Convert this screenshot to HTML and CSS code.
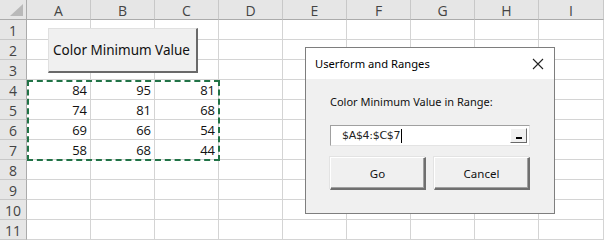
FILE: index.html
```html
<!DOCTYPE html>
<html>
<head>
<meta charset="utf-8">
<link rel="stylesheet" href="styles.css">
</head>
<body>
<div class="sheet">
  <div class="grid">
    <div class="hdr corner"><span class="tri"></span></div>
    <div class="hdr col">A</div><div class="hdr col">B</div><div class="hdr col">C</div><div class="hdr col">D</div><div class="hdr col">E</div><div class="hdr col">F</div><div class="hdr col">G</div><div class="hdr col">H</div><div class="hdr col">I</div>

    <div class="hdr row">1</div><div class="c"></div><div class="c"></div><div class="c"></div><div class="c"></div><div class="c"></div><div class="c"></div><div class="c"></div><div class="c"></div><div class="c"></div>
    <div class="hdr row">2</div><div class="c"></div><div class="c"></div><div class="c"></div><div class="c"></div><div class="c"></div><div class="c"></div><div class="c"></div><div class="c"></div><div class="c"></div>
    <div class="hdr row">3</div><div class="c"></div><div class="c"></div><div class="c"></div><div class="c"></div><div class="c"></div><div class="c"></div><div class="c"></div><div class="c"></div><div class="c"></div>
    <div class="hdr row">4</div><div class="c n">84</div><div class="c n">95</div><div class="c n">81</div><div class="c"></div><div class="c"></div><div class="c"></div><div class="c"></div><div class="c"></div><div class="c"></div>
    <div class="hdr row">5</div><div class="c n">74</div><div class="c n">81</div><div class="c n">68</div><div class="c"></div><div class="c"></div><div class="c"></div><div class="c"></div><div class="c"></div><div class="c"></div>
    <div class="hdr row">6</div><div class="c n">69</div><div class="c n">66</div><div class="c n">54</div><div class="c"></div><div class="c"></div><div class="c"></div><div class="c"></div><div class="c"></div><div class="c"></div>
    <div class="hdr row">7</div><div class="c n">58</div><div class="c n">68</div><div class="c n">44</div><div class="c"></div><div class="c"></div><div class="c"></div><div class="c"></div><div class="c"></div><div class="c"></div>
    <div class="hdr row">8</div><div class="c"></div><div class="c"></div><div class="c"></div><div class="c"></div><div class="c"></div><div class="c"></div><div class="c"></div><div class="c"></div><div class="c"></div>
    <div class="hdr row">9</div><div class="c"></div><div class="c"></div><div class="c"></div><div class="c"></div><div class="c"></div><div class="c"></div><div class="c"></div><div class="c"></div><div class="c"></div>
    <div class="hdr row">10</div><div class="c"></div><div class="c"></div><div class="c"></div><div class="c"></div><div class="c"></div><div class="c"></div><div class="c"></div><div class="c"></div><div class="c"></div>
    <div class="hdr row">11</div><div class="c"></div><div class="c"></div><div class="c"></div><div class="c"></div><div class="c"></div><div class="c"></div><div class="c"></div><div class="c"></div><div class="c"></div>
  </div>

  <div class="marquee"></div>

  <div class="sheetbtn">Color Minimum Value</div>

  <div class="dialog">
    <div class="titlebar">
      <span class="title">Userform and Ranges</span>
      <svg class="close" width="12" height="12" viewBox="0 0 12 12"><path d="M1 1 L11 11 M11 1 L1 11" stroke="#222" stroke-width="1.1" fill="none"/></svg>
    </div>
    <div class="body">
      <div class="label">Color Minimum Value in Range:</div>
      <div class="refedit">
        <span class="reftext">$A$4:$C$7</span><span class="caret"></span>
        <span class="refbtn"><span class="bar"></span></span>
      </div>
      <div class="buttons">
        <div class="btn">Go</div>
        <div class="btn">Cancel</div>
      </div>
    </div>
  </div>
</div>
</body>
</html>
```

FILE: styles.css
```css
* { box-sizing: border-box; }
html, body { margin: 0; padding: 0; background: #fff; }
body { width: 604px; height: 241px; overflow: hidden; }

.sheet { position: relative; width: 604px; height: 241px; }

.grid {
  display: grid;
  grid-template-columns: 27px repeat(8, 64px) 65px;
  grid-template-rows: 20px repeat(11, 20px);
}

.hdr {
  background: #e6e6e6;
  color: #444;
  font-family: "Open Sans", "Noto Sans", sans-serif;
  font-size: 14px;
  display: flex;
  align-items: center;
  justify-content: center;
  border-right: 1px solid #c8c8c8;
  border-bottom: 1px solid #c8c8c8;
}
.hdr.col { border-bottom: 1px solid #ababab; padding-top: 1px; }
.hdr.row { border-right: 1px solid #ababab; padding-top: 1px; }
.hdr.corner { position: relative; border-bottom: 1px solid #ababab; border-right: 1px solid #ababab; }
.tri {
  position: absolute;
  right: 3px;
  bottom: 3px;
  width: 0; height: 0;
  border-left: 13px solid transparent;
  border-bottom: 12px solid #b9b9b9;
}

.c {
  border-right: 1px solid #d4d4d4;
  border-bottom: 1px solid #d4d4d4;
  font-family: "Open Sans", "Noto Sans", sans-serif;
  font-size: 13px;
  color: #111;
}
.n {
  display: flex;
  align-items: center;
  justify-content: flex-end;
  padding-right: 3px;
  padding-top: 1px;
}

.marquee {
  position: absolute;
  left: 27px;
  top: 80px;
  width: 193px;
  height: 81px;
  border: 2px dashed #217346;
}

.sheetbtn {
  position: absolute;
  left: 48px;
  top: 28px;
  width: 150px;
  height: 45px;
  background: #f0f0f0;
  border-top: 1px solid #e0e0e0;
  border-left: 1px solid #e0e0e0;
  border-right: 2px solid #6a6a6a;
  border-bottom: 2px solid #6a6a6a;
  font-family: "Noto Sans", "Open Sans", sans-serif;
  font-size: 13.5px;
  color: #111;
  display: flex;
  align-items: center;
  justify-content: center;
  padding-right: 2px;
}

.dialog {
  position: absolute;
  left: 305px;
  top: 47px;
  width: 250px;
  height: 167px;
  border: 1px solid #7e7e7e;
  background: #f0f0f0;
  font-family: "Noto Sans", "Open Sans", sans-serif;
  font-size: 11px;
  color: #111;
  display: flex;
  flex-direction: column;
}
.titlebar {
  height: 31px;
  background: #fff;
  display: flex;
  align-items: center;
  justify-content: space-between;
  padding: 0 10px 0 9px;
}
.title { font-size: 11.2px; color: #000; }
.close { display: block; }

.body {
  flex: 1;
  padding: 15px 24px 0 24px;
  display: flex;
  flex-direction: column;
}
.label { height: 16px; line-height: 16px; }

.refedit {
  margin-top: 15px;
  width: 200px;
  height: 21px;
  background: #fff;
  border-top: 1px solid #a0a0a0;
  border-left: 1px solid #a0a0a0;
  border-right: 1px solid #e3e3e3;
  border-bottom: 1px solid #e3e3e3;
  display: flex;
  align-items: center;
  padding-left: 11px;
  position: relative;
  font-family: "DejaVu Sans", "Liberation Sans", sans-serif;
  font-size: 11px;
  letter-spacing: -0.3px;
}
.reftext { color: #222; }
.caret { width: 1px; height: 14px; background: #000; margin-left: 1px; }
.refbtn {
  position: absolute;
  right: 2px;
  top: 2px;
  width: 17px;
  height: 15px;
  background: #f0f0f0;
  border-top: 1px solid #fff;
  border-left: 1px solid #fff;
  border-right: 1px solid #696969;
  border-bottom: 1px solid #696969;
  display: flex;
  align-items: flex-end;
  justify-content: center;
  padding-bottom: 3px;
}
.bar { width: 6px; height: 2px; background: #000; }

.buttons {
  margin-top: 11px;
  display: flex;
  gap: 8px;
}
.btn {
  width: 96px;
  height: 33px;
  background: #f0f0f0;
  border-top: 1px solid #fff;
  border-left: 1px solid #fff;
  border-right: 2px solid #6f6f6f;
  border-bottom: 2px solid #6f6f6f;
  box-shadow: inset -1px -1px 0 #a0a0a0, -1px -1px 0 #e3e3e3;
  display: flex;
  align-items: center;
  justify-content: center;
  font-size: 11.5px;
}
```
